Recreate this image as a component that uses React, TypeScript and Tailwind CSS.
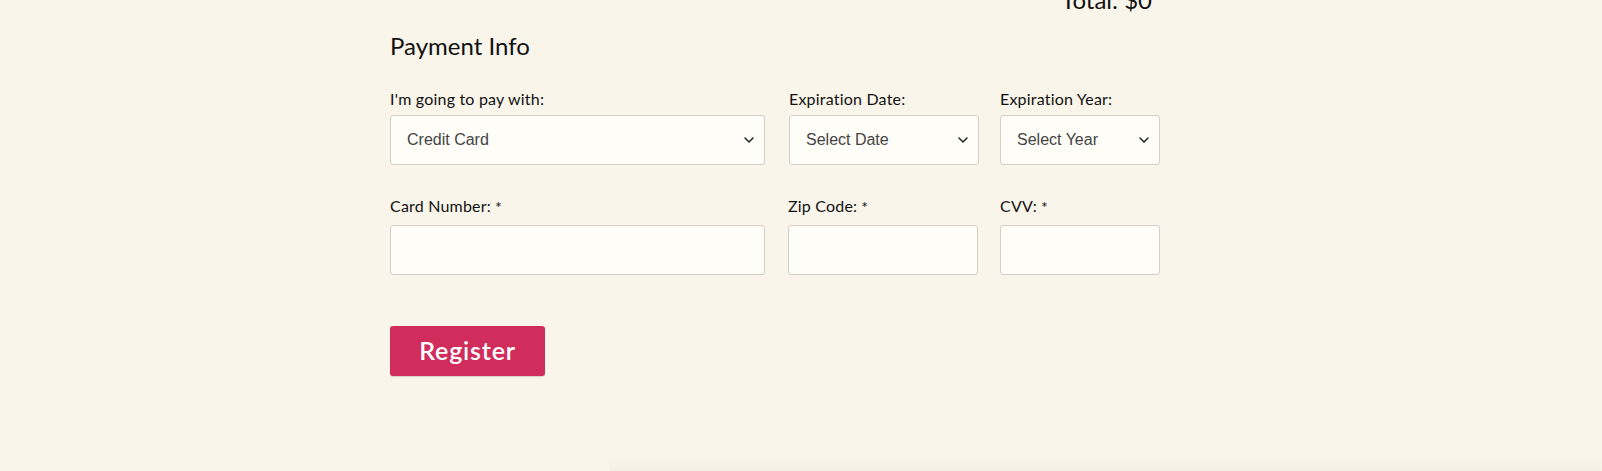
import React from "react";

function Chevron() {
  return (
    <svg width="10" height="6" viewBox="0 0 10 6" className="absolute right-[10px] top-1/2 -translate-y-1/2" fill="none">
      <path d="M1 1 L5 5 L9 1" stroke="#222" strokeWidth="1.5" strokeLinecap="round" strokeLinejoin="round" />
    </svg>
  );
}

function SelectBox({ text, width }: { text: string; width: string }) {
  return (
    <div className={`relative h-[50px] ${width} rounded-[3px] border border-[#d3cfc8] bg-[#fffdf8] flex items-center pl-[16px] text-[16px] text-[#444] font-['Liberation_Sans',Arial,sans-serif]`}>
      {text}
      <Chevron />
    </div>
  );
}

function InputBox({ width }: { width: string }) {
  return <div className={`h-[50px] ${width} rounded-[3px] border border-[#d3cfc8] bg-[#fffdf8]`} />;
}

function Label({ children }: { children: React.ReactNode }) {
  return <div className="text-[16px] leading-[18px] tracking-[0.2px] text-[#111]">{children}</div>;
}

function Req() {
  return <span className="ml-[4px] text-[16px] relative top-[1px]">*</span>;
}

export default function App() {
  return (
    <div className="relative h-[471px] overflow-hidden bg-[#f9f5ea] font-['Lato','Noto_Sans',sans-serif] text-[#111]">
      <div className="w-[822px] mx-auto">
        <div className="w-[770px]">
          <div className="-mt-[15px] h-[29px] text-right text-[24px] leading-[29px] pr-[8px]">Total: $0</div>
          <h2 className="mt-[17px] text-[24px] leading-[29px]">Payment Info</h2>

          <div className="mt-[30px] flex">
            <div className="w-[375px]">
              <Label>I'm going to pay with:</Label>
              <div className="mt-[7px]">
                <SelectBox text="Credit Card" width="w-[375px]" />
              </div>
            </div>
            <div className="w-[190px] ml-[24px]">
              <Label>Expiration Date:</Label>
              <div className="mt-[7px]">
                <SelectBox text="Select Date" width="w-[190px]" />
              </div>
            </div>
            <div className="w-[160px] ml-[21px]">
              <Label>Expiration Year:</Label>
              <div className="mt-[7px]">
                <SelectBox text="Select Year" width="w-[160px]" />
              </div>
            </div>
          </div>

          <div className="mt-[32px] flex">
            <div className="w-[375px]">
              <Label>
                Card Number:<Req />
              </Label>
              <div className="mt-[10px]">
                <InputBox width="w-[375px]" />
              </div>
            </div>
            <div className="w-[190px] ml-[23px]">
              <Label>
                Zip Code:<Req />
              </Label>
              <div className="mt-[10px]">
                <InputBox width="w-[190px]" />
              </div>
            </div>
            <div className="w-[160px] ml-[22px]">
              <Label>
                CVV:<Req />
              </Label>
              <div className="mt-[10px]">
                <InputBox width="w-[160px]" />
              </div>
            </div>
          </div>

          <button className="mt-[51px] h-[50px] w-[155px] rounded-[3px] bg-[#d02c5c] text-white text-[25px] font-semibold tracking-[0.8px] flex items-center justify-center shadow-[0_1px_1px_rgba(0,0,0,0.15)]">
            Register
          </button>
        </div>
      </div>
      <div className="absolute left-[610px] right-0 bottom-0 h-[12px] bg-gradient-to-b from-transparent to-[#f4efe5]" />
    </div>
  );
}
